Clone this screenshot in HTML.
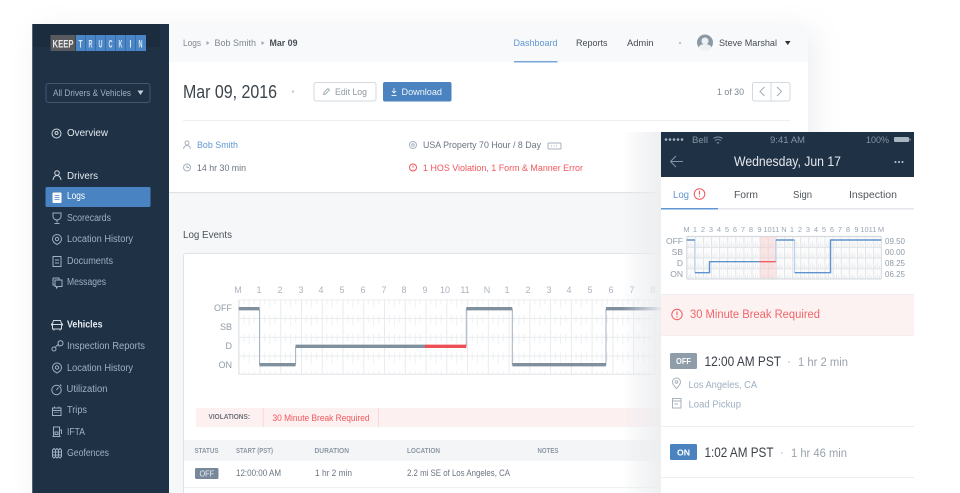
<!DOCTYPE html>
<html><head><meta charset="utf-8"><title>KeepTruckin</title>
<style>
html,body{margin:0;padding:0;background:#fff;width:960px;height:493px;overflow:hidden}
svg{display:block}
text{font-family:"Liberation Sans",sans-serif;white-space:pre}
.n{font-size:10px;fill:#9fb0c2}
.nb{font-size:10px;fill:#e3e9ef}
.t{font-size:9.2px;fill:#6b7480}
.h{font-size:9px;fill:#aab4bf}
.th{font-size:7px;fill:#8d98a4;font-weight:bold}
.r{font-size:9.2px;fill:#f1565c}
.m{font-size:7.5px;fill:#9aa6b2}
.ic{fill:none;stroke:#9fb0c2;stroke-width:1}
.ig{fill:none;stroke:#a7b2bd;stroke-width:1}
</style></head><body>
<svg width="960" height="493" viewBox="0 0 960 493" xmlns="http://www.w3.org/2000/svg">
<defs>
<filter id="b" x="-20%" y="-20%" width="140%" height="140%"><feGaussianBlur stdDeviation="14"/></filter>
<linearGradient id="fade" x1="0" x2="1" y1="0" y2="0"><stop offset="0" stop-color="#e8eaed" stop-opacity="0"/><stop offset="1" stop-color="#eceef0" stop-opacity=".95"/></linearGradient>
<pattern id="pm" patternUnits="userSpaceOnUse" x="238.7" y="299.3" width="20.76" height="18.75">
<path d="M5.19 0v5M10.38 0v8M15.57 0v5M5.19 18.75v-3M15.57 18.75v-3M10.38 18.75v-3" stroke="#eef0f2" stroke-width="1" fill="none"/>
<path d="M.5 0v18.75" stroke="#e8ebee" stroke-width="1"/>
<path d="M0 .5h20.76" stroke="#e8ebee" stroke-width="1"/>
</pattern>
<pattern id="pp" patternUnits="userSpaceOnUse" x="686.7" y="236.3" width="8.11" height="10.67">
<rect width="8.11" height="10.67" fill="#fbfbfc"/>
<path d="M2 10.67v-3M4 10.67v-5M6 10.67v-3" stroke="#dfe3e7" stroke-width=".7" fill="none"/>
<path d="M.4 0v10.67" stroke="#dde1e5" stroke-width=".8"/>
<path d="M0 .4h8.11" stroke="#dde1e5" stroke-width=".8"/>
</pattern>
</defs>

<!-- page shadow -->
<rect x="38" y="30" width="776" height="480" rx="8" fill="#c9ced6" opacity=".35" filter="url(#b)"/>
<!-- page -->
<path d="M32 24H800a8 8 0 0 1 8 8V493H32Z" fill="#fff"/>
<rect x="169" y="192" width="639" height="301" fill="#f6f7f9"/>
<path d="M169 24H800a8 8 0 0 1 8 8V62H169Z" fill="#f8f9fb"/>
<rect x="169" y="192" width="639" height="1.2" fill="#dfe2e6"/>

<!-- sidebar -->
<rect x="32" y="24" width="137" height="469" fill="#1f3145"/>
<rect x="32" y="24" width="1" height="469" fill="#55636f"/>
<rect x="33" y="24" width="127" height="23" fill="#1c2c3f"/>
<rect x="50.5" y="35" width="25" height="16" fill="#585a5e"/>
<rect x="76" y="35" width="70" height="16" fill="#4a86c5"/>
<path d="M85.5 35v16M95.5 35v16M105.5 35v16M115.5 35v16M125.500 35v16M135.5 35v16" stroke="#3a6da5" stroke-width="1"/>
<text x="52.5" y="47.500" font-size="11" font-weight="bold" fill="#e9e9e9" textLength="21" lengthAdjust="spacingAndGlyphs">KEEP</text>
<g font-size="11" font-weight="bold" fill="#dce9f6">
<text x="78.500" y="47.500" textLength="4" lengthAdjust="spacingAndGlyphs">T</text><text x="88.500" y="47.500" textLength="4" lengthAdjust="spacingAndGlyphs">R</text><text x="98.500" y="47.500" textLength="4" lengthAdjust="spacingAndGlyphs">U</text><text x="108.500" y="47.500" textLength="4" lengthAdjust="spacingAndGlyphs">C</text><text x="118.500" y="47.500" textLength="4" lengthAdjust="spacingAndGlyphs">K</text><text x="129.500" y="47.500" textLength="2" lengthAdjust="spacingAndGlyphs">I</text><text x="138.500" y="47.500" textLength="4" lengthAdjust="spacingAndGlyphs">N</text>
</g>
<rect x="46" y="83.5" width="104" height="19" rx="2.5" fill="#1f3145" stroke="#43586f"/>
<text class="n" x="53" y="96" style="font-size:9px" textLength="78" lengthAdjust="spacingAndGlyphs">All Drivers &amp; Vehicles</text>
<path d="M137.5 90.5h6l-3 4.500Z" fill="#c3cfdb"/>

<circle cx="56.5" cy="133.5" r="4.5" class="ic" style="stroke:#cfd8e1"/><circle cx="56.5" cy="133" r="1.5" class="ic" style="stroke:#cfd8e1"/>
<text class="nb" x="67" y="136" textLength="41" lengthAdjust="spacingAndGlyphs">Overview</text>
<circle cx="57" cy="173" r="2.3" class="ic" style="stroke:#cfd8e1"/><path d="M53 180c.5-3 2-4.5 4-4.5s3.5 1.5 4 4.5" class="ic" style="stroke:#cfd8e1"/>
<text class="nb" x="67" y="179" textLength="31" lengthAdjust="spacingAndGlyphs">Drivers</text>

<rect x="45.5" y="187" width="105" height="20" rx="1.5" fill="#4a83c2"/>
<rect x="52.5" y="192.5" width="9" height="10.5" rx="1" fill="#fff"/>
<path d="M54.5 195.5h5M54.5 197.5h5M54.5 199.5h5" stroke="#4a83c2" stroke-width=".8"/>
<text x="67" y="199" font-size="10" fill="#fff" textLength="18" lengthAdjust="spacingAndGlyphs">Logs</text>

<path d="M53 213h8v3.500c0 2-2 3.500-4 3.500s-4-1.500-4-3.500ZM57 220v2.500M54.500 223.500h5" class="ic"/>
<text class="n" x="67" y="221" textLength="44" lengthAdjust="spacingAndGlyphs">Scorecards</text>
<path d="M57 244.500c-3-1.500-4.500-3-4.500-5.500a4.500 4.500 0 0 1 9 0c0 2.500-1.500 4-4.500 5.500Z" class="ic"/><circle cx="57" cy="239" r="1.700" class="ic"/>
<text class="n" x="67" y="242" textLength="66" lengthAdjust="spacingAndGlyphs">Location History</text>
<path d="M53 256.500h8v10h-8ZM55 260h4M55 263h4" class="ic"/>
<text class="n" x="67" y="264" textLength="46" lengthAdjust="spacingAndGlyphs">Documents</text>
<path d="M53 278h6v1.500M53 278v7h1.500M55 280h7v6.500h-4l-1.500 1.500v-1.500H55Z" class="ic"/>
<text class="n" x="67" y="285" textLength="39" lengthAdjust="spacingAndGlyphs">Messages</text>

<path d="M53.500 320.500h7l1 3v5.500h-9v-5.500ZM52.500 324.500h9M54 329v1.500M60 329v1.500M51.500 323.500v2M62.500 323.500v2" class="ic" style="stroke:#cfd8e1"/>
<text class="nb" x="67" y="327.700" font-weight="bold" textLength="35.500" lengthAdjust="spacingAndGlyphs">Vehicles</text>
<path d="M55.500 347l3-3M58 343a2.500 2.500 0 1 1 3.500 2.500l-2.500.5Z" class="ic"/><circle cx="54" cy="349" r="2" class="ic"/>
<text class="n" x="67" y="349" textLength="78" lengthAdjust="spacingAndGlyphs">Inspection Reports</text>
<path d="M57 373c-3-1.500-4.500-3-4.500-5.500a4.500 4.500 0 0 1 9 0c0 2.500-1.500 4-4.500 5.500Z" class="ic"/><circle cx="57" cy="367.500" r="1.700" class="ic"/>
<text class="n" x="67" y="371" textLength="66" lengthAdjust="spacingAndGlyphs">Location History</text>
<circle cx="56.500" cy="390" r="4.700" class="ic"/><path d="M56.500 390l2-2.500M60 384.500l1.500 1.500" class="ic"/>
<text class="n" x="66.500" y="392" textLength="41" lengthAdjust="spacingAndGlyphs">Utilization</text>
<path d="M52.500 408h8.500v7.500h-8.500ZM52.500 410.500h8.500M54.500 406.500v2M59 406.500v2" class="ic"/><path d="M54.500 412.500h4.500" stroke="#9fb0c2" stroke-dasharray="1 1" fill="none"/>
<text class="n" x="67" y="413" textLength="20" lengthAdjust="spacingAndGlyphs">Trips</text>
<path d="M53.500 427h6v9.500h-6ZM52.500 436.500h8M59.500 430h2v4M55 432h3v2.500h-3Z" class="ic"/>
<text class="n" x="67" y="435" textLength="18" lengthAdjust="spacingAndGlyphs">IFTA</text>
<path d="M52.500 450l1.500-1.500 1.500 1.500v6.500l-1.500 1.500-1.500-1.500ZM55.500 450l1.500-1.500 1.500 1.500v6.500l-1.500 1.500-1.500-1.500ZM58.500 450l1.500-1.500 1.500 1.500v6.500l-1.500 1.500-1.500-1.500ZM52 452h10M52 455h10" class="ic"/>
<text class="n" x="67" y="456" textLength="42" lengthAdjust="spacingAndGlyphs">Geofences</text>

<!-- top bar -->
<text class="t" x="183" y="46" textLength="18" lengthAdjust="spacingAndGlyphs" style="fill:#80878f">Logs</text>
<path d="M206.500 41l3 2-3 2Z" fill="#a2a8af"/>
<text class="t" x="214.500" y="46" textLength="41.500" lengthAdjust="spacingAndGlyphs" style="fill:#80878f">Bob Smith</text>
<path d="M261.500 41l3 2-3 2Z" fill="#a2a8af"/>
<text class="t" x="269.500" y="46" textLength="28" lengthAdjust="spacingAndGlyphs" style="fill:#4a5058;font-weight:bold">Mar 09</text>
<text class="t" x="513.500" y="46" textLength="44" lengthAdjust="spacingAndGlyphs" style="fill:#5f97d3">Dashboard</text>
<rect x="514" y="61" width="43.500" height="1.500" fill="#7ba7d8"/>
<text class="t" x="576" y="46" textLength="31.500" lengthAdjust="spacingAndGlyphs" style="fill:#454b52">Reports</text>
<text class="t" x="627" y="46" textLength="26.500" lengthAdjust="spacingAndGlyphs" style="fill:#454b52">Admin</text>
<circle cx="680" cy="43" r="1.200" fill="#c2c8ce"/>
<circle cx="705" cy="42.500" r="8" fill="#8b99a6"/><circle cx="705" cy="41" r="3.500" fill="#eef0f2"/><path d="M698.500 47.500c1-2.500 3.500-3.500 6.500-3.500s5.500 1 6.500 3.500a8 8 0 0 1-13 0Z" fill="#eef0f2"/>
<text class="t" x="719" y="46" textLength="58" lengthAdjust="spacingAndGlyphs" style="fill:#454b52">Steve Marshal</text>
<path d="M785 41h5.500l-2.750 4Z" fill="#2b3138"/>

<!-- title row -->
<text x="183" y="98" font-size="18" fill="#3d444b" textLength="94" lengthAdjust="spacingAndGlyphs">Mar 09, 2016</text>
<circle cx="293" cy="91.500" r="1.200" fill="#c6cbd0"/>
<rect x="314" y="82.500" width="62" height="18.500" rx="2" fill="#fff" stroke="#d3d9df"/>
<path d="M323.500 94.500l.5-2 4-4 1.500 1.500-4 4Z" class="ig"/>
<text class="t" x="335" y="95" textLength="32" lengthAdjust="spacingAndGlyphs" style="fill:#8e98a2">Edit Log</text>
<rect x="383" y="82" width="68.500" height="19.500" rx="2" fill="#4a83c0"/>
<path d="M394 88v5M392 91l2 2 2-2M391.500 95.500h5" fill="none" stroke="#e6eef7" stroke-width=".9"/>
<text class="t" x="401.500" y="95" textLength="40.500" lengthAdjust="spacingAndGlyphs" style="fill:#f0f5fa">Download</text>
<text class="t" x="717" y="95" textLength="27" lengthAdjust="spacingAndGlyphs" style="fill:#7f8891">1 of 30</text>
<rect x="752.500" y="82.500" width="37.500" height="18.500" rx="2" fill="#fff" stroke="#d3d9df"/>
<path d="M771 82.500v18.500" stroke="#d3d9df"/>
<path d="M764.500 87l-4.500 4.500 4.500 4.500M777 87l4.500 4.500-4.500 4.500" fill="none" stroke="#a3adb7"/>
<rect x="183" y="120" width="607" height="1" fill="#eceef0"/>

<!-- info -->
<circle cx="187" cy="143" r="2" class="ig"/><path d="M183.500 149c.4-2.500 1.700-3.500 3.500-3.500s3.100 1 3.500 3.500" class="ig"/>
<text class="t" x="197" y="148" textLength="41" lengthAdjust="spacingAndGlyphs" style="fill:#5f97d3">Bob Smith</text>
<circle cx="187" cy="167.500" r="3.500" class="ig"/><path d="M187 165.500v2h2" class="ig"/>
<text class="t" x="197" y="171" textLength="49" lengthAdjust="spacingAndGlyphs">14 hr 30 min</text>
<circle cx="413" cy="145" r="3.500" class="ig"/><circle cx="413" cy="145" r="1.300" class="ig"/>
<text class="t" x="423" y="148" textLength="118" lengthAdjust="spacingAndGlyphs">USA Property 70 Hour / 8 Day</text>
<rect x="548" y="143" width="13" height="6" rx="1" class="ig"/><path d="M551 146h7" stroke="#a7b2bd" stroke-dasharray="1 1.500"/>
<circle cx="413" cy="167.500" r="3.500" fill="none" stroke="#f1565c"/><path d="M413 165.500v2.500M413 169v.8" stroke="#f1565c" stroke-width=".8"/>
<text class="r" x="423" y="171" textLength="160" lengthAdjust="spacingAndGlyphs">1 HOS Violation, 1 Form &amp; Manner Error</text>

<!-- log events -->
<text x="183" y="238" font-size="10" fill="#4a5159" textLength="49" lengthAdjust="spacingAndGlyphs">Log Events</text>
<path d="M183.500 493V256a2.500 2.500 0 0 1 2.500-2.500H661V493Z" fill="#fff"/>
<path d="M183.500 493V256a2.500 2.500 0 0 1 2.500-2.500H661" fill="none" stroke="#e0e3e6"/>

<g class="h" text-anchor="middle">
<text x="238" y="293">M</text><text x="259" y="293">1</text><text x="280" y="293">2</text><text x="301" y="293">3</text><text x="321" y="293">4</text><text x="342" y="293">5</text><text x="363" y="293">6</text><text x="384" y="293">7</text><text x="404" y="293">8</text><text x="425" y="293">9</text><text x="445" y="293">10</text><text x="465" y="293">11</text><text x="487" y="293">N</text><text x="507" y="293">1</text><text x="528" y="293">2</text><text x="549" y="293">3</text><text x="569" y="293">4</text><text x="590" y="293">5</text><text x="611" y="293">6</text><text x="632" y="293">7</text><text x="653" y="293">8</text>
</g>
<g class="h" text-anchor="end" style="fill:#8f9ba7">
<text x="232" y="311">OFF</text><text x="232" y="330">SB</text><text x="232" y="349">D</text><text x="232" y="368">ON</text>
</g>
<rect x="238.700" y="299.300" width="422.300" height="75" fill="url(#pm)"/>
<path d="M238.700 300v74.300M238.700 374.300H661" stroke="#e0e4e8" fill="none"/>
<path d="M259.500 308.700V364.700M295.600 364.700V346.300M466.300 346.300V308.700M512.300 308.700V364.700M606 364.700V308.700" fill="none" stroke="#a3b1bd" stroke-width="1"/>
<path d="M238.700 308.700H259.500M259.500 364.700H295.600M295.600 346.300H425M466.300 308.700H512.300M512.300 364.700H606M606 308.700H661" fill="none" stroke="#7f909f" stroke-width="3.300"/>
<path d="M425 346.300H466.300" fill="none" stroke="#ee4f54" stroke-width="3.300"/>

<!-- violations -->
<rect x="196" y="408" width="465" height="19" fill="#fdf0f1"/>
<path d="M263.300 408v19M378.500 408v19" stroke="#f8d9db"/>
<text x="208.500" y="419" font-size="7" font-weight="bold" fill="#6d7278" textLength="41.500" lengthAdjust="spacingAndGlyphs">VIOLATIONS:</text>
<text class="r" x="272.500" y="421" textLength="97" lengthAdjust="spacingAndGlyphs">30 Minute Break Required</text>

<rect x="184" y="440" width="477" height="21" fill="#f4f5f7"/>
<text class="th" x="194.500" y="453" textLength="24" lengthAdjust="spacingAndGlyphs">STATUS</text>
<text class="th" x="236" y="453" textLength="37" lengthAdjust="spacingAndGlyphs">START (PST)</text>
<text class="th" x="314.500" y="453" textLength="34.500" lengthAdjust="spacingAndGlyphs">DURATION</text>
<text class="th" x="407" y="453" textLength="33" lengthAdjust="spacingAndGlyphs">LOCATION</text>
<text class="th" x="537.500" y="453" textLength="21" lengthAdjust="spacingAndGlyphs">NOTES</text>
<rect x="195" y="468" width="23.500" height="11" rx="1.500" fill="#76889a"/>
<text x="199.500" y="476.500" font-size="8" fill="#eef1f4" textLength="14.500" lengthAdjust="spacingAndGlyphs">OFF</text>
<text class="t" x="236" y="476" textLength="45" lengthAdjust="spacingAndGlyphs">12:00:00 AM</text>
<text class="t" x="315" y="476" textLength="37" lengthAdjust="spacingAndGlyphs">1 hr 2 min</text>
<text class="t" x="407" y="476" textLength="103" lengthAdjust="spacingAndGlyphs">2.2 mi SE of Los Angeles, CA</text>
<rect x="184" y="487" width="477" height="1" fill="#eef0f2"/>

<!-- fade beside phone -->
<rect x="622" y="132" width="39" height="361" fill="url(#fade)"/>

<!-- phone -->
<rect x="661" y="132" width="253" height="361" fill="#fff"/>
<rect x="661" y="132" width="253" height="45" fill="#1f3145"/>
<g fill="#a9b5c1"><circle cx="666" cy="139.500" r="1.300"/><circle cx="670" cy="139.500" r="1.300"/><circle cx="674" cy="139.500" r="1.300"/><circle cx="678" cy="139.500" r="1.300"/><circle cx="682" cy="139.500" r="1.300"/></g>
<text x="692" y="143" font-size="9.500" fill="#8494a4" textLength="16" lengthAdjust="spacingAndGlyphs">Bell</text>
<path d="M713.500 138.500c2.500-2 6.500-2 9 0M715 140.500c1.700-1.300 4.300-1.300 6 0M716.800 142.300l1.200 1 1.200-1" fill="none" stroke="#8494a4" stroke-width=".9"/>
<text x="770" y="143" font-size="9.500" fill="#8494a4" textLength="35" lengthAdjust="spacingAndGlyphs">9:41 AM</text>
<text x="866" y="143" font-size="9.500" fill="#8494a4" textLength="23" lengthAdjust="spacingAndGlyphs">100%</text>
<rect x="894" y="137" width="15" height="5" rx="1" fill="#a9b5c1"/><rect x="909.500" y="138.500" width="1" height="2" fill="#a9b5c1"/>
<path d="M683 161.500H670.500M676 156l-5.500 5.500 5.500 5.500" fill="none" stroke="#8494a4" stroke-width="1"/>
<text x="734" y="166" font-size="13.500" fill="#e4e8ec" textLength="107" lengthAdjust="spacingAndGlyphs">Wednesday, Jun 17</text>
<g fill="#c3ccd5"><circle cx="895.500" cy="162" r="1"/><circle cx="899" cy="162" r="1"/><circle cx="902.500" cy="162" r="1"/></g>

<text x="673" y="198" font-size="10" fill="#5f97d3" textLength="16" lengthAdjust="spacingAndGlyphs">Log</text>
<circle cx="699.500" cy="194" r="5.300" fill="none" stroke="#f1565c"/><path d="M699.500 190.800v3.700M699.500 195.600v1.200" stroke="#f1565c" stroke-width="1.100"/>
<text x="734" y="198" font-size="10" fill="#4f565d" textLength="24" lengthAdjust="spacingAndGlyphs">Form</text>
<text x="793" y="198" font-size="10" fill="#4f565d" textLength="19" lengthAdjust="spacingAndGlyphs">Sign</text>
<text x="849" y="198" font-size="10" fill="#4f565d" textLength="48" lengthAdjust="spacingAndGlyphs">Inspection</text>
<rect x="661" y="208" width="253" height="1.500" fill="#e3e6ea"/>
<rect x="661" y="208" width="57" height="1.500" fill="#5f97d3"/>

<!-- mini chart -->
<g class="m" text-anchor="middle">
<text x="686.500" y="232">M</text><text x="695" y="232">1</text><text x="703" y="232">2</text><text x="711" y="232">3</text><text x="719" y="232">4</text><text x="727" y="232">5</text><text x="735" y="232">6</text><text x="743" y="232">7</text><text x="751" y="232">8</text><text x="759.500" y="232">9</text><text x="767.500" y="232">10</text><text x="775.500" y="232">11</text><text x="784" y="232">N</text><text x="792" y="232">1</text><text x="800" y="232">2</text><text x="808" y="232">3</text><text x="816" y="232">4</text><text x="824" y="232">5</text><text x="832" y="232">6</text><text x="840" y="232">7</text><text x="848" y="232">8</text><text x="856.500" y="232">9</text><text x="864.500" y="232">10</text><text x="872.500" y="232">11</text><text x="881" y="232">M</text>
</g>
<g text-anchor="end" font-size="8.500" fill="#8f9ba7">
<text x="683" y="244">OFF</text><text x="683" y="255">SB</text><text x="683" y="266">D</text><text x="683" y="277">ON</text>
</g>
<g font-size="8.500" fill="#8f9ba7">
<text x="885" y="244" textLength="20" lengthAdjust="spacingAndGlyphs">09.50</text><text x="885" y="255" textLength="20" lengthAdjust="spacingAndGlyphs">00.00</text><text x="885" y="266" textLength="20" lengthAdjust="spacingAndGlyphs">08.25</text><text x="885" y="277" textLength="20" lengthAdjust="spacingAndGlyphs">06.25</text>
</g>
<rect x="686.700" y="236.300" width="194.600" height="42.700" fill="url(#pp)"/>
<rect x="759.700" y="236.500" width="16.200" height="42.500" fill="#f9c9c9" opacity=".45"/>
<rect x="686.700" y="236.300" width="194.600" height="42.700" rx="1" fill="none" stroke="#d2d7dc" stroke-width=".9"/>
<path d="M694.800 240V272.700M709.500 272.700V261.700M775.800 261.700V240M794.500 240V272.700M830.500 272.700V240" fill="none" stroke="#bcd2e9" stroke-width="1.300"/>
<path d="M686.700 240H695M695 272.700H709.500V261.700H759.700M775.800 240H794.500M794.500 272.700H830.500V240H881.300" fill="none" stroke="#5f93cc" stroke-width="1.400"/>
<path d="M759.700 261.700H775.800" fill="none" stroke="#ee5c60" stroke-width="1.400"/>

<!-- alert -->
<rect x="661" y="294" width="253" height="41" fill="#fdf2f2"/>
<rect x="661" y="294" width="253" height="1" fill="#eceef0"/>
<rect x="661" y="335" width="253" height="1" fill="#f5eeee"/>
<circle cx="677" cy="314.500" r="5.200" fill="none" stroke="#ef5a5f"/><path d="M677 311.500v3.500M677 316.300v1.200" stroke="#ef5a5f" stroke-width="1.100"/>
<text x="690" y="318" font-size="11.500" fill="#f1646a" textLength="130" lengthAdjust="spacingAndGlyphs">30 Minute Break Required</text>

<!-- event 1 -->
<rect x="670" y="353" width="27" height="16" rx="1.500" fill="#8f9daa"/>
<text x="676" y="364" font-size="8.500" font-weight="bold" fill="#fff" textLength="15" lengthAdjust="spacingAndGlyphs">OFF</text>
<text x="704.500" y="366" font-size="13.500" fill="#3a4047" textLength="76.500" lengthAdjust="spacingAndGlyphs">12:00 AM PST</text>
<circle cx="789" cy="362" r="1" fill="#d4d8dc"/>
<text x="798" y="366" font-size="11.500" fill="#9aa3ad" textLength="50" lengthAdjust="spacingAndGlyphs">1 hr 2 min</text>
<path d="M676.500 388.500c-2.500-2.500-4-4.500-4-6.500a4 4 0 0 1 8 0c0 2-1.500 4-4 6.500Z" class="ig"/><circle cx="676.500" cy="382" r="1.300" class="ig"/>
<text x="688.500" y="388" font-size="10" fill="#9fb0c0" textLength="68.500" lengthAdjust="spacingAndGlyphs">Los Angeles, CA</text>
<path d="M672.500 398.500h8.500v9.500h-8.500ZM672.500 401h8.500M674.500 404h3.500" class="ig"/>
<text x="688.500" y="407.500" font-size="10" fill="#9fb0c0" textLength="52.500" lengthAdjust="spacingAndGlyphs">Load Pickup</text>
<rect x="661" y="426" width="253" height="1" fill="#eceef0"/>

<!-- event 2 -->
<rect x="670" y="444" width="27" height="16" rx="1.500" fill="#4a83c0"/>
<text x="677" y="455.500" font-size="8.500" font-weight="bold" fill="#fff" textLength="13" lengthAdjust="spacingAndGlyphs">ON</text>
<text x="704.500" y="457" font-size="13.500" fill="#3a4047" textLength="69" lengthAdjust="spacingAndGlyphs">1:02 AM PST</text>
<circle cx="782" cy="453" r="1" fill="#d4d8dc"/>
<text x="791" y="457" font-size="11.500" fill="#9aa3ad" textLength="56" lengthAdjust="spacingAndGlyphs">1 hr 46 min</text>
<rect x="661" y="477" width="253" height="1" fill="#eceef0"/>
</svg>
</body></html>
